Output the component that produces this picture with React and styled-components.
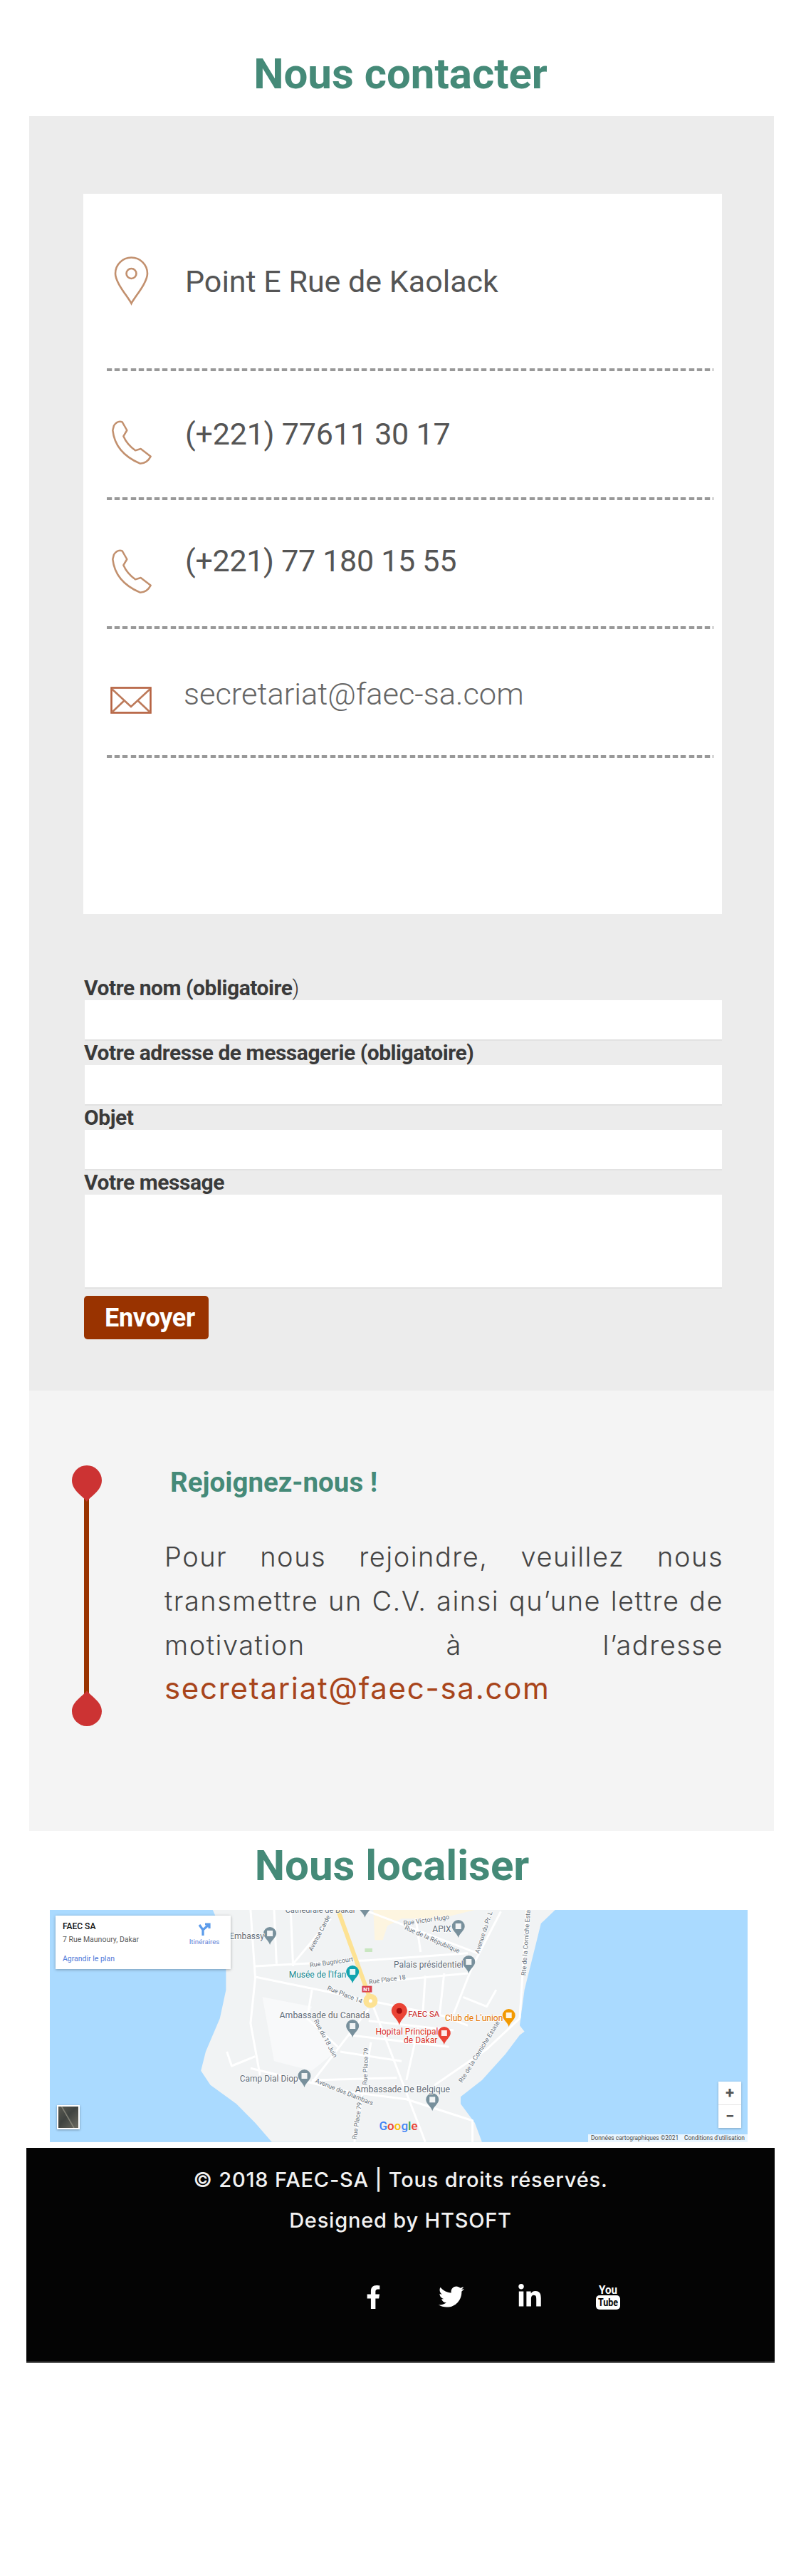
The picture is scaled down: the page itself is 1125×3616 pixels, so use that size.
import styled, { createGlobalStyle } from "styled-components";
import { FaFacebookF, FaTwitter, FaLinkedinIn } from "react-icons/fa";

const GlobalStyle = createGlobalStyle`
    html, body {
        margin: 0;
        padding: 0;
        background: #fff;
    }
    * {
        box-sizing: border-box;
    }
`;

const Page = styled.div`
    width: 1125px;
    height: 3616px;
    overflow: hidden;
    font-family: Roboto, "Liberation Sans", sans-serif;
`;

const Title = styled.h2`
    margin: 0;
    height: ${(p) => p.$height}px;
    padding-top: ${(p) => p.$top}px;
    padding-right: ${(p) => p.$shift || 0}px;
    text-align: center;
    font-size: 60px;
    line-height: 70px;
    font-weight: 700;
    letter-spacing: 0;
    color: #458a78;
`;

const ContactPanel = styled.section`
    margin-left: 41px;
    width: 1046px;
    height: 1789px;
    padding: 109px 73px 0 76px;
    background: #ececec;
`;

const InfoCard = styled.div`
    height: 1011px;
    padding: 0 12px 0 33px;
    background: #fff;
`;

const InfoRow = styled.div`
    height: ${(p) => p.$height}px;
    display: flex;
    align-items: flex-start;
`;

const IconSlot = styled.div`
    width: 110px;
    flex: none;
    padding-top: ${(p) => p.$top}px;
    padding-left: ${(p) => p.$left || 5}px;
    line-height: 0;
`;

const InfoText = styled.div`
    margin-top: ${(p) => p.$top}px;
    margin-left: ${(p) => p.$left || 0}px;
    font-size: ${(p) => p.$size || 43}px;
    line-height: 50px;
    letter-spacing: ${(p) => p.$spacing || 0}px;
    color: ${(p) => p.$color || "#555"};
    font-weight: ${(p) => p.$weight || 400};
    white-space: nowrap;
`;

const DottedLine = styled.div`
    height: 4px;
    background: repeating-linear-gradient(90deg, #999 0 7px, #e8e8e8 7px 8px, #fff 8px 10.2px, #e8e8e8 10.2px 11.2px);
`;

const ContactForm = styled.form`
    margin-top: 87px;
    padding-left: 2px;
`;

const FieldLabel = styled.label`
    display: block;
    height: 34px;
    margin-left: -1px;
    font-size: 30px;
    line-height: 34px;
    font-weight: 700;
    letter-spacing: -0.45px;
    color: #3a3a3a;
    white-space: nowrap;
`;

const Thin = styled.span`
    font-weight: 300;
`;

const TextInput = styled.input`
    display: block;
    width: 100%;
    height: 57px;
    border: 0;
    border-bottom: 2px solid #e2e2e2;
    background: #fff;
    border-radius: 0;
    outline: 0;
`;

const MessageInput = styled.textarea`
    display: block;
    width: 100%;
    height: 132px;
    border: 0;
    border-bottom: 2px solid #e2e2e2;
    background: #fff;
    resize: none;
    outline: 0;
`;

const SendButton = styled.button`
    display: block;
    width: 175px;
    height: 61px;
    margin-top: 10px;
    margin-left: -1px;
    padding: 0 0 0 29px;
    border: 0;
    border-radius: 5px;
    background: #993300;
    color: #fff;
    font-family: Roboto, sans-serif;
    font-size: 36px;
    font-weight: 700;
    letter-spacing: -0.3px;
    text-align: left;
`;

const JoinPanel = styled.section`
    margin-left: 41px;
    width: 1046px;
    height: 618px;
    padding: 105px 0 0 60px;
    background: #f4f4f4;
    display: flex;
    align-items: flex-start;
    gap: 88px;
`;

const JoinBody = styled.div`
    width: 785px;
`;

const JoinHeading = styled.h3`
    margin: 0 0 49px 8px;
    font-size: 38.5px;
    line-height: 48px;
    font-weight: 700;
    color: #458a78;
`;

const JoinText = styled.p`
    margin: 0;
    font-family: Inter, sans-serif;
    font-size: 38px;
    line-height: 62px;
    font-weight: 300;
    letter-spacing: 1.5px;
    color: #444;
    text-align: justify;
`;

const JoinMail = styled.span`
    font-size: 42px;
    line-height: 1;
    font-weight: 400;
    letter-spacing: 1.7px;
    color: #a8451b;
`;

const MapFrame = styled.div`
    position: relative;
    margin-left: 70px;
    width: 980px;
    height: 326px;
    overflow: hidden;
    background: #aadaff;
`;

const PlaceCard = styled.div`
    position: absolute;
    left: 8px;
    top: 8px;
    width: 246px;
    height: 75px;
    padding: 8px 10px;
    background: #fff;
    box-shadow: 0 1px 4px rgba(0, 0, 0, 0.3);
    font-size: 10.5px;
    color: #5b5b5b;
`;

const PlaceName = styled.div`
    font-size: 12px;
    line-height: 15px;
    font-weight: 500;
    color: #111;
`;

const PlaceAddress = styled.div`
    margin-top: 4px;
    line-height: 13px;
`;

const PlaceLink = styled.div`
    margin-top: 14px;
    line-height: 13px;
    color: #4f78d8;
`;

const Directions = styled.div`
    position: absolute;
    right: 14px;
    top: 10px;
    width: 46px;
    text-align: center;
    font-size: 9.7px;
    line-height: 12px;
    color: #5f83d8;
`;

const ZoomBox = styled.div`
    position: absolute;
    right: 9px;
    top: 241px;
    width: 32px;
    height: 65px;
    display: flex;
    flex-direction: column;
    background: #fff;
    box-shadow: 0 1px 3px rgba(0, 0, 0, 0.25);
`;

const ZoomStep = styled.div`
    flex: 1;
    display: flex;
    align-items: center;
    justify-content: center;
    font-size: 22px;
    font-weight: 700;
    color: #555;
    line-height: 1;
    border-top: ${(p) => (p.$split ? "1px solid #e6e6e6" : "0")};
`;

const SatelliteThumb = styled.div`
    position: absolute;
    left: 10px;
    top: 274px;
    width: 32px;
    height: 34px;
    border: 2px solid #fff;
    background:
        linear-gradient(60deg, transparent 45%, #8a897c 48%, transparent 52%),
        linear-gradient(135deg, #5a5a52, #3f4340 45%, #6b6a60);
    box-shadow: 0 1px 3px rgba(0, 0, 0, 0.35);
`;

const Attribution = styled.div`
    position: absolute;
    right: 0;
    bottom: 0;
    height: 11px;
    display: flex;
    gap: 8px;
    padding: 0 4px;
    background: rgba(255, 255, 255, 0.75);
    font-size: 8.4px;
    line-height: 11px;
    color: #444;
    white-space: nowrap;
`;

const Footer = styled.footer`
    margin-top: 8px;
    margin-left: 37px;
    width: 1051px;
    height: 302px;
    padding-top: 27px;
    background: #040404;
    border-bottom: 2px solid #555;
    color: #f2f2f2;
    font-family: Inter, sans-serif;
    text-align: center;
`;

const FooterLine = styled.div`
    height: ${(p) => p.$height}px;
    font-size: 29px;
    line-height: 36px;
    font-weight: 500;
    letter-spacing: 0.8px;
    white-space: nowrap;
`;

const SocialRow = styled.div`
    display: flex;
    margin-top: 70px;
    padding-left: 432px;
`;

const SocialSlot = styled.a`
    width: 110px;
    height: 38px;
    display: flex;
    align-items: center;
    justify-content: center;
    color: #fff;
    font-size: ${(p) => p.$size}px;
`;

const zx = (x) => (x - 45) / 1.5077;
const zy = (y) => (y - 63) / 3;
const points = (list) => list.map(([x, y]) => `${zx(x).toFixed(1)},${zy(y).toFixed(1)}`).join(" ");

const land = [[390, 63], [420, 200], [418, 320], [418, 400], [405, 520], [375, 660], [365, 740], [385, 800], [440, 880], [480, 960], [515, 1040], [960, 1040], [945, 960], [915, 880], [915, 850], [960, 780], [1010, 670], [1040, 590], [1050, 575], [1040, 550], [1050, 400], [1075, 200], [1085, 120], [1115, 63]];

const roads = [
    [[480, 345], [640, 410], [710, 440], [770, 465], [880, 510], [930, 550]],
    [[720, 70], [950, 245]],
    [[1000, 70], [940, 300], [900, 500]],
    [[480, 300], [720, 275], [930, 245]],
    [[720, 370], [930, 330]],
    [[470, 63], [480, 350], [470, 540], [490, 760]],
    [[520, 63], [525, 290]],
    [[555, 63], [560, 300]],
    [[640, 100], [560, 290]],
    [[730, 470], [840, 1040]],
    [[600, 400], [590, 520], [655, 640]],
    [[720, 530], [900, 570]],
    [[680, 590], [890, 640]],
    [[720, 480], [600, 790]],
    [[825, 560], [800, 780]],
    [[660, 660], [790, 700]],
    [[470, 730], [680, 830], [800, 860], [940, 950], [940, 1040]],
    [[860, 800], [970, 650], [1040, 520]],
    [[1055, 63], [1040, 520]],
    [[600, 780], [780, 770]],
    [[725, 620], [690, 1040]],
    [[420, 660], [430, 720], [480, 680]],
    [[990, 400], [970, 470], [920, 430]],
    [[820, 100], [830, 240]],
    [[880, 330], [870, 510]],
    [[840, 340], [835, 490]],
];

const labels = [
    ["Cathédrale de Dakar", 618, 75, 11, "#5f6b76", 0],
    ["Rue Victor Hugo", 843, 115, 9, "#66707a", -8],
    ["APIX", 875, 155, 12, "#5f6b76", 0],
    ["Embassy", 462, 187, 12, "#5f6b76", 0],
    ["Rue de la République", 853, 195, 9, "#66707a", 24],
    ["Avenue du Pr. L", 968, 160, 9, "#66707a", -72],
    ["Avenue Carde", 620, 165, 9, "#66707a", -62],
    ["Rte de la Corniche Estate", 1058, 190, 9, "#66707a", -86],
    ["Rue Bugnicourt", 642, 292, 9, "#66707a", -8],
    ["Palais présidentiel", 847, 305, 12, "#5f6b76", 0],
    ["Musée de l'Ifan", 612, 347, 12, "#12858e", 0],
    ["Rue Place 18", 760, 365, 9, "#66707a", -8],
    ["Rue Place 14", 668, 428, 9, "#66707a", 22],
    ["Ambassade du Canada", 627, 518, 12.3, "#5f6b76", 0],
    ["FAEC SA", 837, 513, 11.5, "#c5221f", 0],
    ["Club de L'union", 943, 530, 12, "#e37400", 0],
    ["Hopital Principal", 801, 589, 12, "#d93025", 0],
    ["de Dakar", 830, 623, 12, "#d93025", 0],
    ["Rue du 18 Juin", 625, 608, 9, "#66707a", 62],
    ["Rue Place 79", 718, 722, 9, "#66707a", -88],
    ["Rue Place 79", 700, 952, 9, "#66707a", -82],
    ["Rte de la Corniche Estate", 958, 665, 9, "#66707a", -58],
    ["Camp Dial Diop", 509, 787, 12, "#5f6b76", 0],
    ["Ambassade De Belgique", 792, 830, 12.3, "#5f6b76", 0],
    ["Avenue des Diambars", 667, 838, 9, "#66707a", 22],
];

const pins = [
    [511, 210, "#78909c"],
    [910, 180, "#78909c"],
    [932, 330, "#78909c"],
    [686, 600, "#78909c"],
    [584, 810, "#78909c"],
    [855, 910, "#78909c"],
    [686, 372, "#12a4af"],
    [1017, 555, "#f29900"],
    [880, 630, "#ea4335"],
    [712, 95, "#78909c"],
];

function MapDrawing() {
    return (
        <svg width="980" height="326" viewBox="0 0 980 326" style={{ display: "block" }}>
            <rect width="980" height="326" fill="#aadaff" />
            <polygon points={points(land)} fill="#f1f3f4" />
            <polygon points={points([[730, 63], [945, 63], [870, 100], [790, 100], [760, 130], [750, 190], [733, 190]])} fill="#fdf5e0" />
            <polygon points={points([[495, 430], [600, 470], [590, 520], [650, 660], [600, 740], [520, 700]])} fill="#f8f9fa" />
            <polygon points={points([[712, 225], [728, 225], [728, 240], [712, 240]])} fill="#c8e6c0" />
            {roads.map((road, i) => (
                <polyline key={i} points={points(road)} fill="none" stroke="#fff" strokeWidth="3" strokeLinejoin="round" />
            ))}
            <polyline points={points([[655, 63], [720, 420]])} fill="none" stroke="#fde293" strokeWidth="6" />
            <ellipse cx={zx(724)} cy={zy(446)} rx="10" ry="10" fill="#fde293" />
            <circle cx={zx(724)} cy={zy(446)} r="2.5" fill="#fff" />
            <rect x={zx(706)} y={zy(383)} width="14" height="9" fill="#d9444f" />
            <text x={zx(716)} y={zy(404)} fontSize="7.5" fontWeight="700" fill="#fff" textAnchor="middle" fontFamily="Roboto">N1</text>
            {pins.map(([x, y, color], i) => (
                <g key={i} transform={`translate(${zx(x)} ${zy(y)})`}>
                    <path d="M0 0C-2-7-9-10-9-16A9 9 0 1 1 9-16C9-10 2-7 0 0Z" fill={color} />
                    <rect x="-4" y="-20" width="8" height="8" fill="#fff" opacity="0.9" />
                </g>
            ))}
            {labels.map(([text, x, y, size, color, angle], i) => (
                <text
                    key={i}
                    x={zx(x)}
                    y={zy(y)}
                    fontSize={size}
                    fill={color}
                    textAnchor="middle"
                    fontFamily="Roboto"
                    stroke="#fff"
                    strokeWidth="1.5"
                    paintOrder="stroke"
                    transform={angle ? `rotate(${angle} ${zx(x)} ${zy(y)})` : undefined}
                >
                    {text}
                </text>
            ))}
            <g transform={`translate(${zx(785)} ${zy(548)})`}>
                <path d="M0 0C-2-9-11-13-11-20A11 11 0 1 1 11-20C11-13 2-9 0 0Z" fill="#ea4335" />
                <circle cy="-20" r="4" fill="#a50e0e" />
            </g>
            <text x={zx(783)} y={zy(990)} fontSize="17" fontWeight="500" textAnchor="middle" fontFamily="Roboto">
                <tspan fill="#4285f4">G</tspan>
                <tspan fill="#ea4335">o</tspan>
                <tspan fill="#fbbc05">o</tspan>
                <tspan fill="#4285f4">g</tspan>
                <tspan fill="#34a853">l</tspan>
                <tspan fill="#ea4335">e</tspan>
            </text>
        </svg>
    );
}

const iconStroke = "#c2906e";

function PinIcon() {
    return (
        <svg width="49" height="69" viewBox="0 0 49 69" fill="none" stroke={iconStroke} strokeWidth="2.6">
            <path d="M24.5 66C20 57 2 37 2 24A22.5 22.5 0 0 1 47 24C47 37 29 57 24.5 66Z" />
            <circle cx="24.5" cy="24" r="7" />
        </svg>
    );
}

function PhoneIcon() {
    return (
        <svg width="60" height="65" viewBox="70 85 180 195" fill="none" stroke={iconStroke} strokeWidth="7.5" strokeLinejoin="round">
            <path d="M85 110Q100 88 120 95L140 130L125 155Q140 190 175 215L198 208L240 240Q225 270 195 270Q90 225 80 130Z" />
        </svg>
    );
}

function MailIcon() {
    return (
        <svg width="58" height="38" viewBox="0 0 58 38" fill="none" stroke="#bd7a5a" strokeWidth="2.6">
            <rect x="1.5" y="1.5" width="55" height="35" stroke="#b5603f" />
            <path d="M2 3L29 28L56 3M2 36L20 19M56 36L38 19" />
        </svg>
    );
}

function YouTubeIcon() {
    return (
        <svg width="36" height="38" viewBox="0 0 36 38" overflow="visible" fontFamily="Roboto" fontWeight="700" textAnchor="middle">
            <text x="18" y="15" fontSize="16" fill="#fff" textLength="26" lengthAdjust="spacingAndGlyphs">You</text>
            <rect x="1" y="17" width="34" height="20" rx="5" fill="#fff" />
            <text x="18" y="32" fontSize="15" fill="#040404" textLength="28" lengthAdjust="spacingAndGlyphs">Tube</text>
        </svg>
    );
}

function TimelineMark() {
    return (
        <svg width="42" height="366" viewBox="0 0 42 366">
            <rect x="17" y="40" width="7" height="290" fill="#993300" />
            <path d="M21 51C17 44 0 36 0 21A21 21 0 0 1 42 21C42 36 25 44 21 51Z" fill="#cc3333" />
            <path d="M21 316C17 323 0 331 0 345A21 21 0 0 0 42 345C42 331 25 323 21 316Z" fill="#cc3333" />
        </svg>
    );
}

function App() {
    return (
        <Page>
            <GlobalStyle />
            <Title $height={163} $top={69}>Nous contacter</Title>
            <ContactPanel>
                <InfoCard>
                    <InfoRow $height={245}>
                        <IconSlot $top={88} $left={10}><PinIcon /></IconSlot>
                        <InfoText $top={98}>Point E Rue de Kaolack</InfoText>
                    </InfoRow>
                    <DottedLine />
                    <InfoRow $height={177}>
                        <IconSlot $top={68}><PhoneIcon /></IconSlot>
                        <InfoText $top={63} $spacing={-0.2}>(+221) 77611 30 17</InfoText>
                    </InfoRow>
                    <DottedLine />
                    <InfoRow $height={177}>
                        <IconSlot $top={68}><PhoneIcon /></IconSlot>
                        <InfoText $top={60} $spacing={-0.3}>(+221) 77 180 15 55</InfoText>
                    </InfoRow>
                    <DottedLine />
                    <InfoRow $height={177}>
                        <IconSlot $top={81}><MailIcon /></IconSlot>
                        <InfoText $top={67} $left={-2} $size={43.4} $color="#666" $weight={300}>secretariat@faec-sa.com</InfoText>
                    </InfoRow>
                    <DottedLine />
                </InfoCard>
                <ContactForm>
                    <FieldLabel>Votre nom (obligatoire<Thin>)</Thin></FieldLabel>
                    <TextInput />
                    <FieldLabel>Votre adresse de messagerie (obligatoire)</FieldLabel>
                    <TextInput />
                    <FieldLabel>Objet</FieldLabel>
                    <TextInput />
                    <FieldLabel>Votre message</FieldLabel>
                    <MessageInput />
                    <SendButton type="button">Envoyer</SendButton>
                </ContactForm>
            </ContactPanel>
            <JoinPanel>
                <TimelineMark />
                <JoinBody>
                    <JoinHeading>Rejoignez-nous !</JoinHeading>
                    <JoinText>
                        Pour nous rejoindre, veuillez nous transmettre un C.V. ainsi qu’une lettre de motivation à l’adresse{" "}
                        <JoinMail>secretariat@faec-sa.com</JoinMail>
                    </JoinText>
                </JoinBody>
            </JoinPanel>
            <Title $height={111} $top={14} $shift={24}>Nous localiser</Title>
            <MapFrame>
                <MapDrawing />
                <PlaceCard>
                    <PlaceName>FAEC SA</PlaceName>
                    <PlaceAddress>7 Rue Maunoury, Dakar</PlaceAddress>
                    <PlaceLink>Agrandir le plan</PlaceLink>
                    <Directions>
                        <svg width="18" height="18" viewBox="0 0 18 18" fill="none" stroke="#5b9bea" strokeWidth="3.2">
                            <path d="M7 18V10L2 3M7 10L15 3M10 2H16V8" />
                        </svg>
                        <div>Itinéraires</div>
                    </Directions>
                </PlaceCard>
                <SatelliteThumb />
                <ZoomBox>
                    <ZoomStep>+</ZoomStep>
                    <ZoomStep $split>−</ZoomStep>
                </ZoomBox>
                <Attribution>
                    <span>Données cartographiques ©2021</span>
                    <span>Conditions d'utilisation</span>
                </Attribution>
            </MapFrame>
            <Footer>
                <FooterLine $height={57}>© 2018 FAEC-SA | Tous droits réservés.</FooterLine>
                <FooterLine $height={36}>Designed by HTSOFT</FooterLine>
                <SocialRow>
                    <SocialSlot $size={33}><FaFacebookF /></SocialSlot>
                    <SocialSlot $size={36}><FaTwitter /></SocialSlot>
                    <SocialSlot $size={36}><FaLinkedinIn /></SocialSlot>
                    <SocialSlot $size={38}><YouTubeIcon /></SocialSlot>
                </SocialRow>
            </Footer>
        </Page>
    );
}

export default App;
